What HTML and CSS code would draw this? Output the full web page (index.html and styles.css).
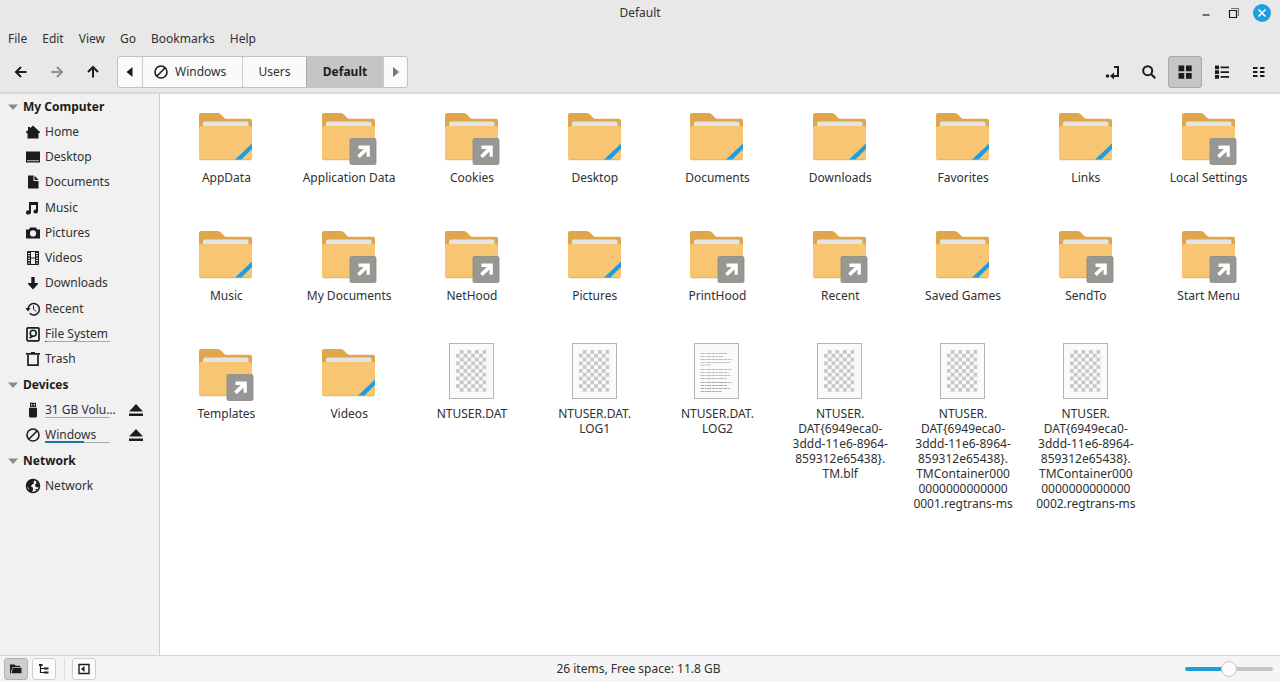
FILE: index.html
```
<!DOCTYPE html>
<html lang="en">
<head>
<meta charset="utf-8">
<meta name="viewport" content="width=device-width, initial-scale=1">
<title>Default</title>
<link rel="stylesheet" href="styles.css">
</head>
<body>
<svg class="sprite" aria-hidden="true">
  <symbol id="folder-base" viewBox="0 0 64 64">
    <path fill="#e0a64c" d="M5 12a2 2 0 0 1 2-2h16c2 0 3 .6 4.200 1.800l2.400 2.400c1.200 1.200 2 1.500 3.600 1.500H56a2 2 0 0 1 2 2V30H5z"/>
    <path fill="#e4e4e4" d="M9 20.500a2 2 0 0 1 2-2h41.500a2 2 0 0 1 2 2V26H9z"/>
    <path fill="#f8c572" d="M5 25a2 2 0 0 1 2-2h49a2 2 0 0 1 2 2v30a2 2 0 0 1-2 2H7a2 2 0 0 1-2-2z"/>
    <path fill="none" stroke="#d9a95c" stroke-width=".7" d="M5.500 56q.5.800 1.500.8h49q1 0 1.500-.8"/>
  </symbol>
  <symbol id="folder" viewBox="0 0 64 64">
    <use href="#folder-base"/>
    <path fill="#1f9ede" d="M41 56.500 58 40.500V46L47.500 56.500z"/>
  </symbol>
  <symbol id="folder-link" viewBox="0 0 64 64">
    <use href="#folder-base"/>
    <rect x="33" y="35.500" width="26" height="26" rx="1.500" fill="#999794" stroke="#8b8986" stroke-width=".8"/>
    <path fill="#fff" d="M41.500 42.500h11.300v11.300h-3.200v-5.200L42.700 55l-2.500-2.500 6.600-6.600h-5.300z"/>
  </symbol>
  <pattern id="checks" x="16" y="11" width="7.600" height="7.600" patternUnits="userSpaceOnUse">
    <path fill="#c8c8c8" d="M3.800 0h3.800v3.800H3.800zM0 3.800h3.800v3.800H0z"/>
  </pattern>
  <symbol id="binary" viewBox="0 0 64 64">
    <rect x="9.500" y="4.500" width="44" height="55" fill="#fafafa" stroke="#b4b4b4"/>
    <rect x="16" y="11" width="30.400" height="41.800" fill="url(#checks)"/>
  </symbol>
  <symbol id="textfile" viewBox="0 0 64 64">
    <rect x="9.500" y="4.500" width="44" height="55" fill="#fafafa" stroke="#b4b4b4"/>
    <path fill="none" stroke="#b4b4b4" stroke-width=".9" stroke-dasharray="3.500 .5 2 .5 4.500 .5" d="M15.500 14.500h27M15.500 17.500h23M15.500 20.500h31M15.500 23.500h30M15.500 26h10M15.500 30.500h31M15.500 33.500h28M15.500 36.500h30M15.500 39.500h26"/>
    <path fill="none" stroke="#a2a2a2" stroke-width=".9" stroke-dasharray="3.500 .5 2 .5 4.500 .5" d="M15.500 43.500h31M15.500 46.500h27M15.500 49.500h29M15.500 52.500h21"/>
  </symbol>
  <symbol id="blocked" viewBox="0 0 16 16"><path fill="none" stroke="currentColor" stroke-width="1.600" d="M14 8A6 6 0 1 1 2 8a6 6 0 0 1 12 0zM4 12l8-8"/></symbol>
  <symbol id="eject" viewBox="0 0 16 16"><path fill="currentColor" d="M8 2l6.500 7v.5h-13V9zM1 11.500h14V14H1z"/></symbol>
  <symbol id="expander" viewBox="0 0 10 6"><path fill="#8b8b8b" d="M0 .5h10L5 6z"/></symbol>
</svg>

<header class="header">
  <div class="titlebar">
    <h1 class="title">Default</h1>
    <div class="window-buttons">
      <button class="win" aria-label="Minimize"><svg class="icon" viewBox="0 0 16 16"><path stroke="currentColor" stroke-width="1.200" d="M4.500 10h7"/></svg></button>
      <button class="win" aria-label="Restore"><svg class="icon" viewBox="0 0 16 16"><g fill="none" stroke="currentColor"><path stroke-width="1.200" d="M3.500 5.500h7v7h-7z"/><path opacity=".6" d="M5 3.500h7.500V11"/></g></svg></button>
      <button class="win" aria-label="Close"><svg class="icon close" viewBox="0 0 18 18"><circle cx="9" cy="9" r="9" fill="#1f9ede"/><path stroke="#fff" stroke-width="1.600" d="m5.500 5.500 7 7m0-7-7 7"/></svg></button>
    </div>
  </div>
  <nav class="menubar" aria-label="Menu">
    <button>File</button><button>Edit</button><button>View</button><button>Go</button><button>Bookmarks</button><button>Help</button>
  </nav>
  <div class="toolbar">
    <div class="tools">
      <button class="tool" aria-label="Back"><svg class="icon" viewBox="0 0 16 16"><path fill="none" stroke="currentColor" stroke-width="2" d="M13.500 8H4M8 3 3 8l5 5"/></svg></button>
      <button class="tool" aria-label="Forward" disabled><svg class="icon" viewBox="0 0 16 16"><path fill="none" stroke="currentColor" stroke-width="2" d="M2.500 8H12M8 3l5 5-5 5"/></svg></button>
      <button class="tool" aria-label="Up"><svg class="icon" viewBox="0 0 16 16"><path fill="none" stroke="currentColor" stroke-width="2" d="M8 13.500V4M3 8l5-5 5 5"/></svg></button>
    </div>
    <nav class="pathbar" aria-label="Location">
      <button class="crumb arrow" aria-label="Scroll left"><svg class="icon" viewBox="0 0 16 16"><path fill="currentColor" d="M10.500 3v10l-6-5z"/></svg></button>
      <button class="crumb drive"><svg class="icon" viewBox="0 0 16 16"><use href="#blocked"/></svg>Windows</button>
      <button class="crumb folder">Users</button>
      <button class="crumb current" aria-current="page">Default</button>
      <button class="crumb arrow dim" aria-label="Scroll right"><svg class="icon" viewBox="0 0 16 16"><path fill="currentColor" d="M5 3v10l6-5z"/></svg></button>
    </nav>
    <div class="tools actions">
      <button class="tool" aria-label="Toggle location entry"><svg class="icon" viewBox="0 0 16 16"><circle cx="2.500" cy="12" r="1.800" fill="currentColor"/><path fill="none" stroke="currentColor" stroke-width="2" d="M9 3h4v9H7"/><path fill="currentColor" d="M5 12l4-3.500v7z"/></svg></button>
      <button class="tool" aria-label="Search"><svg class="icon" viewBox="0 0 16 16"><g fill="none" stroke="currentColor" stroke-width="2"><circle cx="6.700" cy="6.700" r="4.500"/><path d="m9.800 9.800 4.500 4.500"/></g></svg></button>
    </div>
    <div class="tools views">
      <button class="tool active" aria-label="Icon view" aria-pressed="true"><svg class="icon" viewBox="0 0 16 16"><path fill="currentColor" d="M1.500 1.500h5.700v5.700H1.500zM9 1.500h5.700v5.700H9zM1.500 9h5.700v5.700H1.500zM9 9h5.700v5.700H9z"/></svg></button>
      <button class="tool" aria-label="List view"><svg class="icon" viewBox="0 0 16 16"><path fill="currentColor" d="M1 1.500h4v3.700H1zM1 6.200h4v3.700H1zM1 11h4v3.700H1zM6.500 2.500h8.500v1.800H6.500zM6.500 7.200H15V9H6.500zM6.500 12H15v1.800H6.500z"/></svg></button>
      <button class="tool" aria-label="Compact view"><svg class="icon" viewBox="0 0 16 16"><path fill="currentColor" d="M2 3h4.500v2H2zM9 3h4.500v2H9zM2 7h4.500v2H2zM9 7h4.500v2H9zM2 11h4.500v2H2zM9 11h4.500v2H9z"/></svg></button>
    </div>
  </div>
</header>

<div class="body">
  <aside class="sidebar">
    <h2 class="heading"><svg class="expander"><use href="#expander"/></svg>My Computer</h2>
    <ul class="places computer">
      <li><a class="place" href="#"><svg class="icon" viewBox="0 0 16 16"><path fill="currentColor" d="M8 1.500 15 8v1h-1.500v5.500h-11V9H1V8l2-2V3h2v1.300z"/></svg><span>Home</span></a></li>
      <li><a class="place" href="#"><svg class="icon" viewBox="0 0 16 16"><path fill="currentColor" d="M1 2.500h14v11H1z"/><path stroke="#f1f1f1" stroke-width=".8" d="M2 11.700h12"/></svg><span>Desktop</span></a></li>
      <li><a class="place" href="#"><svg class="icon" viewBox="0 0 16 16"><path fill="currentColor" d="M3 1.500h5.500V7h5v7.500H3zM9.500 1.500l4 4.500h-4z"/></svg><span>Documents</span></a></li>
      <li><a class="place" href="#"><svg class="icon" viewBox="0 0 16 16"><path fill="currentColor" d="M4 2h9v9.500a2.300 2 0 1 1-2-1.900V5H6v7.500A2.500 2.100 0 1 1 4 10.400z"/></svg><span>Music</span></a></li>
      <li><a class="place" href="#"><svg class="icon" viewBox="0 0 16 16"><path fill="currentColor" fill-rule="evenodd" d="M5 2.500h6l1 2h3v9H1v-9h3zM8 5.300a3.100 3.100 0 1 0 0 6.200 3.100 3.100 0 0 0 0-6.200"/></svg><span>Pictures</span></a></li>
      <li><a class="place" href="#"><svg class="icon" viewBox="0 0 16 16"><path fill="none" stroke="currentColor" d="M2.500 1.500h11v13h-11zM5.500 1.500v13M10.500 1.500v13M5.500 8h5"/><path stroke="currentColor" stroke-width="2" stroke-dasharray="1.400 1" d="M4 1.500v13M12 1.500v13"/></svg><span>Videos</span></a></li>
      <li><a class="place" href="#"><svg class="icon" viewBox="0 0 16 16"><path fill="currentColor" d="M6.300 2h3.400v6H13v1l-5 5.500L3 9V8h3.300z"/></svg><span>Downloads</span></a></li>
      <li><a class="place" href="#"><svg class="icon" viewBox="0 0 16 16"><path fill="none" stroke="currentColor" stroke-width="1.500" d="M3 8a5.700 5.700 0 1 1 1.700 4.300"/><path fill="currentColor" d="M.5 7h5L3 10.500z"/><path fill="none" stroke="currentColor" d="M8.500 4.500V8l2.500 2.500"/></svg><span>Recent</span></a></li>
      <li><a class="place" href="#"><svg class="icon" viewBox="0 0 16 16"><rect x="2" y="1.800" width="12" height="13" rx="1" fill="none" stroke="currentColor" stroke-width="1.700"/><circle cx="8.200" cy="7.200" r="3" fill="none" stroke="currentColor" stroke-width="1.600"/><path stroke="currentColor" stroke-width="1.700" d="m4.500 12 3.300-2"/></svg><span class="usage system">File System</span></a></li>
      <li><a class="place" href="#"><svg class="icon" viewBox="0 0 16 16"><path fill="none" stroke="currentColor" stroke-width="1.700" d="M3 4v10.200h10V4M1 2.800h14"/><path fill="currentColor" d="M6 1h4v1.500H6z"/></svg><span>Trash</span></a></li>
    </ul>
    <h2 class="heading"><svg class="expander"><use href="#expander"/></svg>Devices</h2>
    <ul class="places devices">
      <li class="device"><a class="place" href="#"><svg class="icon" viewBox="0 0 16 16"><path fill="currentColor" fill-rule="evenodd" d="M5 .8h6V5h1v9q0 1.500-1.500 1.500h-5Q4 15.500 4 14V5h1zM6 2v1.500h1.300V2zM8.700 2v1.500H10V2z"/><path stroke="#f1f1f1" stroke-width=".8" d="M4 5.400h8"/></svg><span class="usage">31 GB Volu…</span></a><button class="eject" aria-label="Eject 31 GB Volume"><svg class="icon" viewBox="0 0 16 16"><use href="#eject"/></svg></button></li>
      <li class="device"><a class="place" href="#"><svg class="icon" viewBox="0 0 16 16"><use href="#blocked"/></svg><span class="usage windows">Windows</span></a><button class="eject" aria-label="Eject Windows"><svg class="icon" viewBox="0 0 16 16"><use href="#eject"/></svg></button></li>
    </ul>
    <h2 class="heading"><svg class="expander"><use href="#expander"/></svg>Network</h2>
    <ul class="places network">
      <li><a class="place" href="#"><svg class="icon" viewBox="0 0 16 16"><circle cx="8" cy="8" r="6.500" fill="none" stroke="currentColor" stroke-width="1.500"/><path fill="currentColor" d="M2 5 5 2l3-.5 1.500 1-1 1.500.5 1.500-2 1L6 8.500l2 1.200V12l-1.500 2.300L4 13l-.5-3L1.500 8zM11 3l2.500 2 .8 3-1.300 1.500-2.500-.8L10 6.500l1.500-1zM10.500 11l2.300.3L11 13.300z"/></svg><span>Network</span></a></li>
    </ul>
  </aside>

  <main class="content">
    <ul class="files">
      <li class="file"><svg class="thumb"><use href="#folder"/></svg><span>AppData</span></li>
      <li class="file"><svg class="thumb"><use href="#folder-link"/></svg><span>Application Data</span></li>
      <li class="file"><svg class="thumb"><use href="#folder-link"/></svg><span>Cookies</span></li>
      <li class="file"><svg class="thumb"><use href="#folder"/></svg><span>Desktop</span></li>
      <li class="file"><svg class="thumb"><use href="#folder"/></svg><span>Documents</span></li>
      <li class="file"><svg class="thumb"><use href="#folder"/></svg><span>Downloads</span></li>
      <li class="file"><svg class="thumb"><use href="#folder"/></svg><span>Favorites</span></li>
      <li class="file"><svg class="thumb"><use href="#folder"/></svg><span>Links</span></li>
      <li class="file"><svg class="thumb"><use href="#folder-link"/></svg><span>Local Settings</span></li>
      <li class="file"><svg class="thumb"><use href="#folder"/></svg><span>Music</span></li>
      <li class="file"><svg class="thumb"><use href="#folder-link"/></svg><span>My Documents</span></li>
      <li class="file"><svg class="thumb"><use href="#folder-link"/></svg><span>NetHood</span></li>
      <li class="file"><svg class="thumb"><use href="#folder"/></svg><span>Pictures</span></li>
      <li class="file"><svg class="thumb"><use href="#folder-link"/></svg><span>PrintHood</span></li>
      <li class="file"><svg class="thumb"><use href="#folder-link"/></svg><span>Recent</span></li>
      <li class="file"><svg class="thumb"><use href="#folder"/></svg><span>Saved Games</span></li>
      <li class="file"><svg class="thumb"><use href="#folder-link"/></svg><span>SendTo</span></li>
      <li class="file"><svg class="thumb"><use href="#folder-link"/></svg><span>Start Menu</span></li>
      <li class="file"><svg class="thumb"><use href="#folder-link"/></svg><span>Templates</span></li>
      <li class="file"><svg class="thumb"><use href="#folder"/></svg><span>Videos</span></li>
      <li class="file"><svg class="thumb"><use href="#binary"/></svg><span>NTUSER.DAT</span></li>
      <li class="file"><svg class="thumb"><use href="#binary"/></svg><span>NTUSER.DAT.<br>LOG1</span></li>
      <li class="file"><svg class="thumb"><use href="#textfile"/></svg><span>NTUSER.DAT.<br>LOG2</span></li>
      <li class="file"><svg class="thumb"><use href="#binary"/></svg><span>NTUSER.<br>DAT{6949eca0-<br>3ddd-11e6-8964-<br>859312e65438}.<br>TM.blf</span></li>
      <li class="file"><svg class="thumb"><use href="#binary"/></svg><span>NTUSER.<br>DAT{6949eca0-<br>3ddd-11e6-8964-<br>859312e65438}.<br>TMContainer000<br>0000000000000<br>0001.regtrans-ms</span></li>
      <li class="file"><svg class="thumb"><use href="#binary"/></svg><span>NTUSER.<br>DAT{6949eca0-<br>3ddd-11e6-8964-<br>859312e65438}.<br>TMContainer000<br>0000000000000<br>0002.regtrans-ms</span></li>
    </ul>
  </main>
</div>

<footer class="statusbar">
  <div class="panes">
    <button class="pane active" aria-label="Show places" aria-pressed="true"><svg class="icon" viewBox="0 0 16 16"><path fill="currentColor" d="M2 3.500h4.500l1 1.300H12V6H4.500L3 10.500v1.800H2zM4.800 6.800H13.500V12.300H3.500z"/></svg></button>
    <button class="pane" aria-label="Show treeview"><svg class="icon" viewBox="0 0 16 16"><path fill="none" stroke="currentColor" stroke-width="1.200" d="M4.500 3.500v8h4M4.500 7.500h4"/><path fill="currentColor" d="M3 3h3.500v2H3zM8 6.500h4.500v2H8zM8 10.500h4.500v2H8z"/></svg></button>
    <span class="divider"></span>
    <button class="pane" aria-label="Hide sidebar"><svg class="icon" viewBox="0 0 16 16"><path fill="none" stroke="currentColor" stroke-width="1.400" d="M3 3.500h10v9H3z"/><path fill="currentColor" d="M8.500 5v6L5 8z"/></svg></button>
  </div>
  <span>26 items, Free space: 11.8 GB</span>
  <input class="zoom" type="range" min="0" max="100" value="50" aria-label="Zoom">
</footer>
</body>
</html>
```
FILE: styles.css
```
* { box-sizing: border-box; }

body {
  margin: 0;
  min-height: 100vh;
  display: flex;
  flex-direction: column;
  background: #fff;
  color: #303030;
  font: 12px/16px "Noto Sans", sans-serif;
}

button {
  margin: 0;
  padding: 0;
  border: 0;
  background: none;
  color: inherit;
  font: inherit;
}

ul { margin: 0; padding: 0; list-style: none; }
a { color: inherit; text-decoration: none; }

.sprite { position: absolute; width: 0; height: 0; }
.icon { display: block; flex: none; width: 16px; height: 16px; color: #1c1c1c; }

/* Header */
.header { background: #e8e8e8; border-bottom: 2px solid #d9d9d9; }
.titlebar {
  display: grid;
  grid-template-columns: 1fr auto 1fr;
  align-items: center;
  height: 26px;
}
.title { grid-column: 2; margin: 0; font-size: 12px; font-weight: 400; line-height: 16px; }
.window-buttons { display: flex; justify-content: flex-end; }
.win { display: grid; place-items: center; width: 28px; height: 26px; }
.win:last-child { margin-right: 4px; }
.close { width: 18px; height: 18px; }

.menubar { display: flex; gap: 15px; padding: 0 8px; height: 26px; }

.toolbar { display: flex; align-items: center; height: 40px; padding: 0 4px; }
.tools { display: flex; gap: 2px; }
.tool {
  display: grid;
  place-items: center;
  width: 34px;
  height: 32px;
  border: 1px solid transparent;
  border-radius: 3px;
}
.tool:disabled .icon { color: #8e8e8e; }
.tool.active { background: #c5c5c5; border-color: #a9a9a9; }
.actions { margin-left: auto; margin-right: 2px; }
.views { gap: 3px; }

.pathbar {
  display: flex;
  height: 32px;
  margin-left: 7px;
  border: 1px solid #c2c2c2;
  border-radius: 3px;
  background: #fafafa;
  overflow: hidden;
}
.crumb {
  display: flex;
  align-items: center;
  justify-content: center;
}
.crumb + .crumb { border-left: 1px solid #cbcbcb; }
.arrow { width: 24px; }
.dim .icon { color: #777; }
.drive { width: 100px; justify-content: flex-start; gap: 6px; padding-left: 10px; }
.folder { width: 64px; }
.crumb.current { width: 77px; background: #c5c5c5; border-color: #a9a9a9; color: #1c1c1c; font-weight: 700; }

/* Body */
.body { flex: 1; display: flex; }
.sidebar {
  flex: none;
  width: 160px;
  background: #f1f1f1;
  border-right: 1px solid #cdcdcd;
}
.heading {
  display: flex;
  align-items: center;
  gap: 5px;
  height: 25px;
  margin: 0;
  padding-left: 8px;
  color: #1c1c1c;
  font-size: 12px;
  line-height: 16px;
}
.expander { width: 10px; height: 6px; }
.places { display: grid; grid-auto-rows: 1fr; align-items: center; }
.computer { height: 253px; }
.devices { height: 51px; }
.network { height: 25px; }
.place { display: flex; align-items: center; gap: 4px; padding-left: 25px; }
.device { display: flex; align-items: center; justify-content: space-between; }
.eject { padding-right: 15px; }
.usage {
  min-width: 65px;
  background: linear-gradient(#a8a8a8, #a8a8a8) left bottom / 65px 1px no-repeat;
}
.system {
  background:
    linear-gradient(#1b76a8, #1b76a8) left bottom / 2px 1px no-repeat,
    linear-gradient(#a8a8a8, #a8a8a8) left bottom / 65px 1px no-repeat;
}
.windows {
  background:
    linear-gradient(#1b76a8, #1b76a8) left bottom / 39px 2px no-repeat,
    linear-gradient(#a8a8a8, #a8a8a8) left bottom / 65px 1px no-repeat;
}

.content { flex: 1; padding: 9px 10px 9px 5px; }
.files {
  display: grid;
  grid-template-columns: repeat(auto-fill, minmax(120px, 1fr));
  row-gap: 36px;
}
.file {
  display: flex;
  flex-direction: column;
  align-items: center;
  gap: 3px;
  line-height: 15px;
  text-align: center;
}
.thumb { width: 64px; height: 64px; }

/* Status bar */
.statusbar {
  display: grid;
  grid-template-columns: 1fr auto 1fr;
  align-items: center;
  height: 27px;
  padding: 0 7px 0 4px;
  background: #f5f5f5;
  border-top: 1px solid #d6d6d6;
}
.panes { display: flex; gap: 4px; }
.pane {
  display: grid;
  place-items: center;
  width: 24px;
  height: 22px;
  border: 1px solid #cfcfcf;
  border-radius: 3px;
  background: #fbfbfb;
}
.pane.active { background: #cecece; border-color: #b0b0b0; }
.divider { width: 1px; margin: 0 3px 0 4px; background: #dedede; }

.zoom {
  appearance: none;
  justify-self: end;
  width: 88px;
  height: 16px;
  margin: 0;
  background: none;
}
.zoom::-webkit-slider-runnable-track {
  height: 4px;
  border-radius: 2px;
  background: linear-gradient(90deg, #1f9ede 50%, #c5c5c5 50%);
}
.zoom::-webkit-slider-thumb {
  appearance: none;
  width: 16px;
  height: 16px;
  margin-top: -6px;
  border: 1px solid #c6c6c6;
  border-radius: 50%;
  background: #fcfcfc;
}
```
